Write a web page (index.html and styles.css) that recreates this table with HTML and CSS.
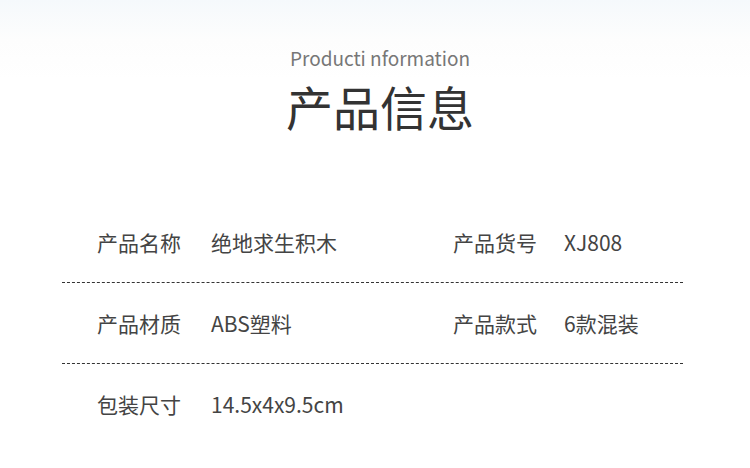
FILE: index.html
```html
<!DOCTYPE html>
<html lang="zh-CN">
<head>
  <meta charset="UTF-8" />
  <meta name="viewport" content="width=device-width, initial-scale=1.0" />
  <title>产品信息</title>
  <link rel="stylesheet" href="styles.css">
</head>
<body>
  <div class="page">
    <div class="header">
      <p class="sub">Producti nformation</p>
      <h1>产品信息</h1>
    </div>

    <div class="info">
      <div class="row">
        <div class="cell"><span class="label">产品名称</span><span class="value">绝地求生积木</span></div>
        <div class="cell"><span class="label">产品货号</span><span class="value">XJ808</span></div>
      </div>
      <div class="row">
        <div class="cell"><span class="label">产品材质</span><span class="value">ABS塑料</span></div>
        <div class="cell"><span class="label">产品款式</span><span class="value">6款混装</span></div>
      </div>
      <div class="row last">
        <div class="cell"><span class="label">包装尺寸</span><span class="value">14.5x4x9.5cm</span></div>
      </div>
    </div>
  </div>
</body>
</html>
```

FILE: styles.css
```css
body {
  margin: 0;
  font-family: "Noto Sans CJK SC", "Noto Sans", sans-serif;
  background: linear-gradient(#f5f9fc, #fdfdfd 40px, #ffffff 80px);
  color: #444;
}
.page {
  width: 750px;
  height: 468px;
  overflow: hidden;
}
.header {
  text-align: center;
  padding: 44px 0 0 10px;
}
.sub {
  margin: 0;
  font-size: 19px;
  line-height: 28px;
  color: #777;
}
h1 {
  margin: 0;
  font-size: 47px;
  font-weight: normal;
  line-height: 68px;
  color: #333;
}
.info {
  margin: 62px 0 0 62px;
  width: 621px;
}
.row {
  display: flex;
  height: 80px;
  align-items: center;
  border-bottom: 1px dashed #333;
}
.row.last {
  border-bottom: none;
}
.cell {
  display: flex;
  font-size: 21px;
  line-height: 28px;
}
.cell:first-child {
  width: 356px;
  padding-left: 35px;
}
.label {
  width: 111px;
}
.cell:first-child .label {
  width: 114px;
}
```
